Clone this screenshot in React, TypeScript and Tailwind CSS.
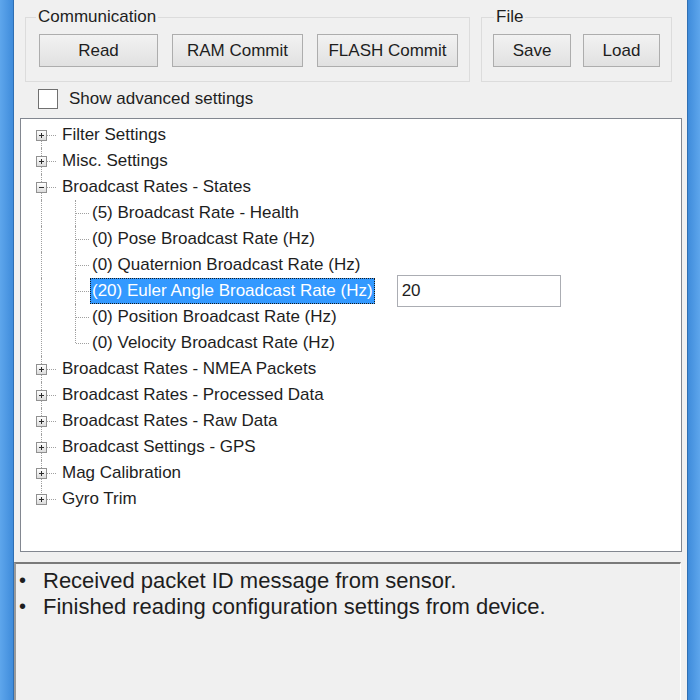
import React from 'react';

interface NodeProps {
  label: string;
  children?: string[];
}

const nodes: NodeProps[] = [
  { label: 'Filter Settings' },
  { label: 'Misc. Settings' },
  {
    label: 'Broadcast Rates - States',
    children: [
      '(5) Broadcast Rate - Health',
      '(0) Pose Broadcast Rate (Hz)',
      '(0) Quaternion Broadcast Rate (Hz)',
      '(20) Euler Angle Broadcast Rate (Hz)',
      '(0) Position Broadcast Rate (Hz)',
      '(0) Velocity Broadcast Rate (Hz)',
    ],
  },
  { label: 'Broadcast Rates - NMEA Packets' },
  { label: 'Broadcast Rates - Processed Data' },
  { label: 'Broadcast Rates - Raw Data' },
  { label: 'Broadcast Settings - GPS' },
  { label: 'Mag Calibration' },
  { label: 'Gyro Trim' },
];

const SELECTED = '(20) Euler Angle Broadcast Rate (Hz)';

const WinButton: React.FC<{ label: string; width: string }> = ({ label, width }) => (
  <button
    className={`${width} h-[33px] border border-[#adadad] bg-gradient-to-b from-[#f2f2f2] to-[#e1e1e1] text-[17px] text-[#1e1e1e] leading-none`}
  >
    {label}
  </button>
);

const ExpandBox: React.FC<{ open: boolean }> = ({ open }) => (
  <div className="absolute left-[15px] top-[8px] w-[11px] h-[11px] border border-[#919191] bg-gradient-to-b from-white to-[#dcdcdc] flex items-center justify-center">
    <div className="relative w-[5px] h-[5px]">
      <div className="absolute left-0 top-[2px] w-[5px] h-px bg-[#2d2d2d]" />
      {!open && <div className="absolute left-[2px] top-0 w-px h-[5px] bg-[#2d2d2d]" />}
    </div>
  </div>
);

const TopRow: React.FC<{ label: string; open: boolean; first: boolean; last: boolean }> = ({ label, open, first, last }) => (
  <div className="flex h-[26px] items-center">
    <div className="relative w-[39px] h-full shrink-0">
      <div
        className={`absolute left-[20px] border-l border-dotted border-[#a0a0a0] ${first ? 'top-[13px]' : 'top-0'} ${last ? 'bottom-[13px]' : 'bottom-0'}`}
      />
      <div className="absolute left-[21px] top-[13px] w-[14px] border-t border-dotted border-[#a0a0a0]" />
      <ExpandBox open={open} />
    </div>
    <span className="px-[2px] text-[#1e1e1e]">{label}</span>
  </div>
);

const ChildRow: React.FC<{ label: string; last: boolean }> = ({ label, last }) => {
  const selected = label === SELECTED;
  return (
    <div className="flex h-[26px] items-center">
      <div className="relative w-[39px] h-full shrink-0">
        <div className="absolute left-[20px] top-0 bottom-0 border-l border-dotted border-[#a0a0a0]" />
      </div>
      <div className="relative w-[30px] h-full shrink-0">
        <div className={`absolute left-[15px] top-0 border-l border-dotted border-[#a0a0a0] ${last ? 'bottom-[13px]' : 'bottom-0'}`} />
        <div className="absolute left-[16px] top-[13px] w-[13px] border-t border-dotted border-[#a0a0a0]" />
      </div>
      {selected ? (
        <>
          <span className="h-full flex items-center px-[2px] bg-[#3399ff] text-white outline outline-1 outline-dotted outline-[#1a1a1a] -outline-offset-1">
            {label}
          </span>
          <div className="ml-[22px] -my-[3px] w-[164px] h-[32px] border border-[#abadb3] bg-white flex items-center px-[4px] text-[#1e1e1e]">
            20
          </div>
        </>
      ) : (
        <span className="px-[2px] text-[#1e1e1e]">{label}</span>
      )}
    </div>
  );
};

const App: React.FC = () => {
  return (
    <div className="w-[700px] h-[700px] flex bg-[#4a98e4] font-['Liberation_Sans',Arial,sans-serif] text-[17px] overflow-hidden">
      {/* window frame left */}
      <div className="w-[14px] shrink-0 bg-gradient-to-r from-[#5ea6ec] to-[#3f8cdb] border-r border-[#2f6fb3]" />

      <div className="flex-1 flex flex-col bg-[#f0f0f0]">
        {/* group boxes */}
        <div className="flex pl-[11px] pt-[7px] gap-[11px] h-[82px]">
          <fieldset className="w-[445px] h-[75px] border border-[#dcdcdc] pl-[13px] pt-[7px] flex gap-[14px]">
            <legend className="-ml-[3px] px-[2px] text-[#1e1e1e] leading-[20px]">Communication</legend>
            <WinButton label="Read" width="w-[119px]" />
            <WinButton label="RAM Commit" width="w-[131px]" />
            <WinButton label="FLASH Commit" width="w-[141px]" />
          </fieldset>
          <fieldset className="w-[191px] h-[75px] border border-[#dcdcdc] pl-[11px] pt-[7px] flex gap-[12px]">
            <legend className="ml-[1px] px-[2px] text-[#1e1e1e] leading-[20px]">File</legend>
            <WinButton label="Save" width="w-[78px]" />
            <WinButton label="Load" width="w-[77px]" />
          </fieldset>
        </div>

        {/* checkbox */}
        <label className="flex items-center h-[20px] mt-[7px] pl-[24px] gap-[11px] text-[#1e1e1e]">
          <span className="w-[20px] h-[20px] border border-[#707070] bg-white" />
          Show advanced settings
        </label>

        {/* tree */}
        <div className="ml-[6px] mr-[5px] mt-[9px] h-[434px] border border-[#828790] bg-white pt-[3px]">
          {nodes.map((n, i) => (
            <React.Fragment key={n.label}>
              <TopRow label={n.label} open={!!n.children} first={i === 0} last={i === nodes.length - 1} />
              {n.children?.map((c, j) => (
                <ChildRow key={c} label={c} last={j === n.children!.length - 1} />
              ))}
            </React.Fragment>
          ))}
        </div>

        {/* log */}
        <div className="mt-[10px] mr-[6px] flex-1 border-t-2 border-l-2 border-t-[#7a7a7a] border-l-[#9a9a9a] border-r border-r-white bg-[#f0f0f0] pt-[3px] text-[22px] text-[#1e1e1e]">
          {['Received packet ID message from sensor.', 'Finished reading configuration settings from device.'].map((t) => (
            <div key={t} className="flex h-[26px] items-center">
              <span className="w-[27px] pl-[3px] shrink-0 text-[20px]">•</span>
              <span>{t}</span>
            </div>
          ))}
        </div>
      </div>

      {/* window frame right */}
      <div className="w-[13px] shrink-0 bg-gradient-to-r from-[#3f8cdb] to-[#5ea6ec] border-l border-[#2f6fb3]" />
    </div>
  );
};

export default App;
